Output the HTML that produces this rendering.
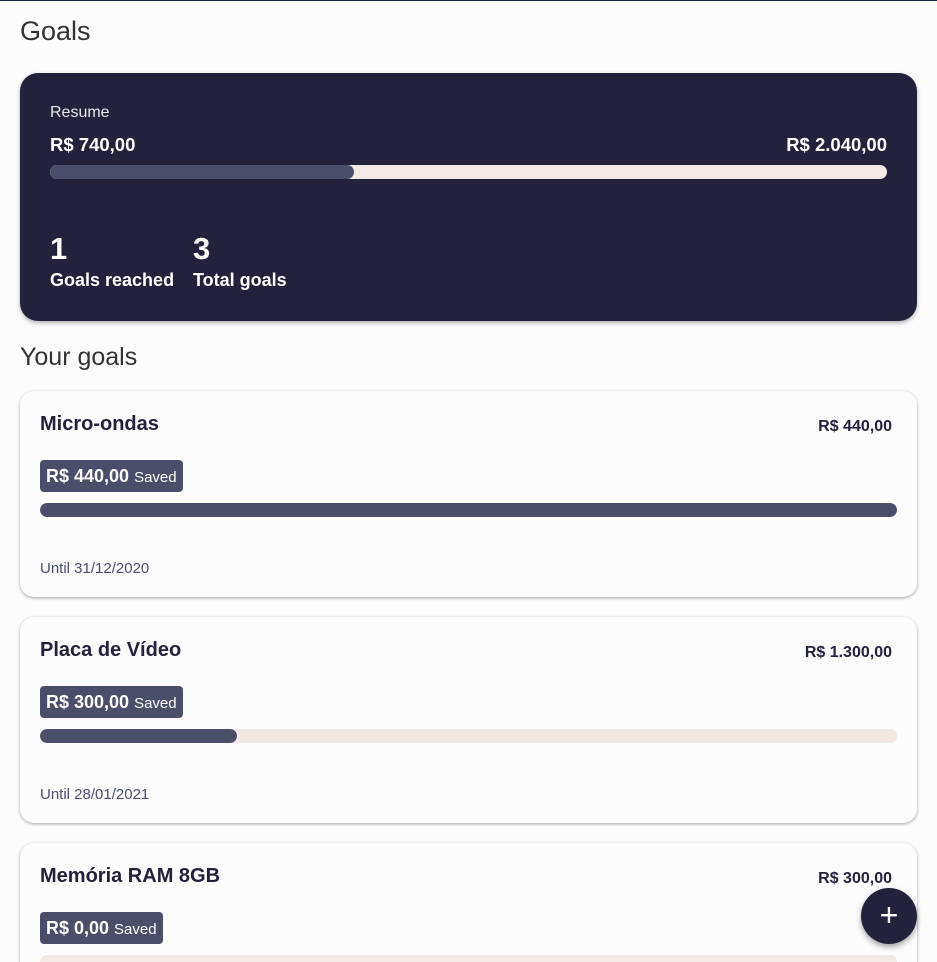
<!DOCTYPE html>
<html style="height:962px;overflow:hidden"><head><style>
*{margin:0;padding:0;box-sizing:border-box}
body{width:937px;height:962px;overflow:hidden;background:#fcfcfc;font-family:"Liberation Sans",sans-serif;position:relative}
.top{position:absolute;left:0;top:0;width:937px;height:1px;background:#1c2540}
h1{position:absolute;left:20px;top:16px;font-size:27px;font-weight:400;color:#333}
.sum{position:absolute;left:20px;top:73px;width:897px;height:248px;background:#22223b;border-radius:18px;color:#fff;box-shadow:0 2px 4px rgba(0,0,0,.3)}
.sum .l{position:absolute;left:30px;top:31px;font-size:16px;color:#e8e8ee}
.sum .a{position:absolute;top:61px;font-size:18.5px;font-weight:700}
.bar{position:absolute;height:14px;border-radius:7px;background:#f2e9e4;overflow:hidden}
.bar i{display:block;height:100%;background:#4a4e69;border-radius:7px}
.n{position:absolute;top:158px;font-size:31px;font-weight:700}
.t{position:absolute;top:197px;font-size:18px;font-weight:700}
h2{position:absolute;left:20px;top:343px;font-size:25px;font-weight:400;color:#333}
.card{position:absolute;left:20px;width:897px;height:206px;background:#fcfcfc;border-radius:14px;box-shadow:0 1px 3px rgba(0,0,0,.35)}
.card .ti{position:absolute;left:20px;top:22px;font-size:20px;font-weight:700;color:#22223b}
.card .tg{position:absolute;right:25px;top:27px;font-size:16px;font-weight:700;color:#22223b}
.card .b{position:absolute;left:20px;top:69px;height:32px;background:#4a4e69;border-radius:4px;color:#fff;padding:0 6px;line-height:33px;font-size:18px;font-weight:700}
.card .b span{font-size:15px;font-weight:400}
.card .bar{left:20px;right:20px;top:112px}
.card .u{position:absolute;left:20px;top:169px;font-size:15px;color:#4a4e69}
.fab{position:absolute;left:861px;top:888px;width:56px;height:56px;border-radius:50%;background:#22223b;box-shadow:0 3px 6px rgba(0,0,0,.35);color:#fff;font-size:32px;text-align:center;line-height:54px}
</style></head><body>
<div class="top"></div>
<h1>Goals</h1>
<div class="sum">
<div class="l">Resume</div>
<div class="a" style="left:30px">R$ 740,00</div>
<div class="a" style="right:30px">R$ 2.040,00</div>
<div class="bar" style="left:30px;right:30px;top:92px"><i style="width:36.3%"></i></div>
<div class="n" style="left:30px">1</div><div class="t" style="left:30px">Goals reached</div>
<div class="n" style="left:173px">3</div><div class="t" style="left:173px">Total goals</div>
</div>
<h2>Your goals</h2>
<div class="card" style="top:391px"><div class="ti">Micro-ondas</div><div class="tg">R$ 440,00</div><div class="b">R$ 440,00 <span>Saved</span></div><div class="bar"><i style="width:100%"></i></div><div class="u">Until 31/12/2020</div></div>
<div class="card" style="top:617px"><div class="ti">Placa de Vídeo</div><div class="tg">R$ 1.300,00</div><div class="b">R$ 300,00 <span>Saved</span></div><div class="bar"><i style="width:23%"></i></div><div class="u">Until 28/01/2021</div></div>
<div class="card" style="top:843px;height:119px;border-radius:14px 14px 0 0"><div class="ti">Memória RAM 8GB</div><div class="tg">R$ 300,00</div><div class="b">R$ 0,00 <span>Saved</span></div><div class="bar"><i style="width:0"></i></div></div>
<div class="fab">+</div>
</body></html>
